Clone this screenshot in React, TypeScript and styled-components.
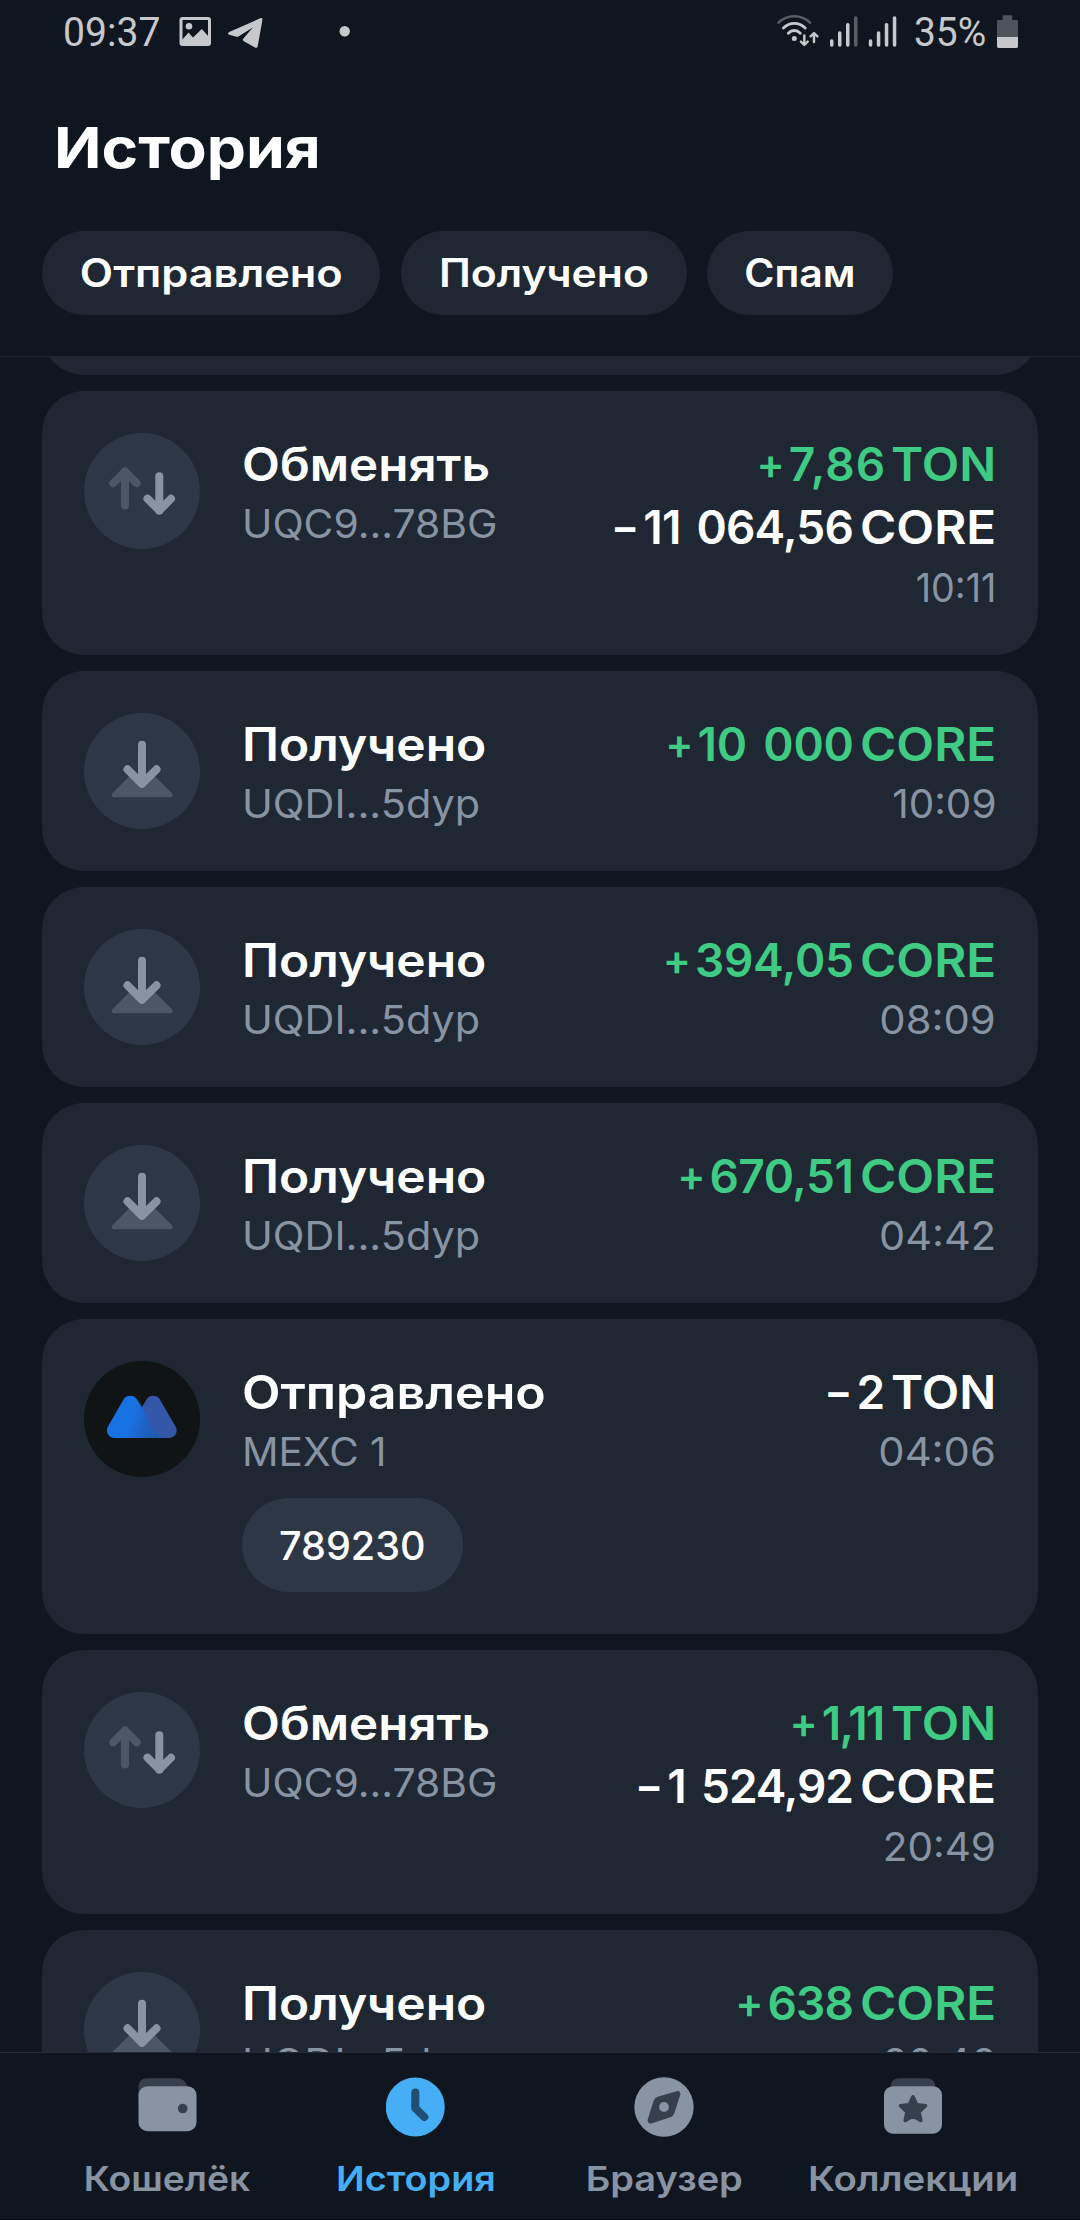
import React from "react";
import styled, { createGlobalStyle } from "styled-components";

const color = {
  page: "#10161f",
  card: "#1e2732",
  tint: "#2e3746",
  faint: "#4d5665",
  muted: "#8994a3",
  dim: "#363f4b",
  text: "#ffffff",
  green: "#3fcb84",
  blue: "#45aef5",
  status: "#c6c8cb",
};

const GlobalStyle = createGlobalStyle`
  *, *::before, *::after { box-sizing: border-box; }
  body {
    margin: 0;
    background: ${color.page};
    font-family: Inter, "Noto Sans", sans-serif;
    font-kerning: normal;
  }
  svg { display: block; flex: none; }
`;

/* Tracking is applied between letters only: the trailing space is pulled back. */
const Tracked = styled.span<{ $ls: number }>`
  letter-spacing: ${(p) => p.$ls}px;
  margin-right: ${(p) => -p.$ls}px;
  word-spacing: 5px;
  white-space: pre;
`;

const Wide = styled.span<{ $by: number; $from?: "left" | "right" | "center" }>`
  display: inline-block;
  white-space: pre;
  transform: scaleX(${(p) => p.$by});
  transform-origin: ${(p) => p.$from ?? "left"} center;
`;

const Screen = styled.div`
  display: flex;
  flex-direction: column;
  width: 1080px;
  height: 2220px;
  overflow: hidden;
  background: ${color.page};
  color: ${color.text};
`;

const Header = styled.header`
  flex: none;
  height: 357px;
  border-bottom: 1px solid #1f2731;
`;

const StatusBar = styled.div`
  display: flex;
  align-items: center;
  height: 66px;
  padding: 0 60px 0 63px;
  font: 400 40px/66px Roboto, sans-serif;
  color: ${color.status};
`;

const Clock = styled.div`
  width: 113px;
`;

const StatusRight = styled.div`
  display: flex;
  align-items: center;
  margin-left: auto;
`;

const Percent = styled.div`
  width: 96px;
  padding-left: 14px;
`;

const Title = styled.h1`
  margin: 0;
  padding-left: 53.5px;
  font-size: 56px;
  font-weight: 700;
  line-height: 165px;
`;

const Chips = styled.div`
  display: flex;
  gap: 20.5px;
  padding-left: 42px;
`;

const Chip = styled.button<{ $width: number }>`
  display: flex;
  align-items: center;
  justify-content: center;
  width: ${(p) => p.$width}px;
  height: 84px;
  padding: 0;
  border: 0;
  border-radius: 42px;
  background: ${color.card};
  color: ${color.text};
  font: 600 39px/84px Inter, "Noto Sans", sans-serif;
`;

const Scroller = styled.main`
  flex: 1;
  min-height: 0;
  overflow: hidden;
`;

const Feed = styled.div`
  display: flex;
  flex-direction: column;
  gap: 16px;
  margin-top: -182px;
  padding: 0 42px;
`;

const Card = styled.article`
  display: flex;
  flex: none;
  gap: 42px;
  min-height: 200px;
  padding: 42px 42px 38px;
  border-radius: 42px;
  background: ${color.card};
`;

const Info = styled.div`
  flex: 1;
  display: flex;
  flex-direction: column;
  align-items: flex-start;
`;

const Kind = styled.div`
  font-size: 46px;
  font-weight: 600;
  line-height: 62px;
`;

const Detail = styled.div`
  font-size: 39px;
  line-height: 58px;
  color: ${color.muted};
`;

const Comment = styled.div`
  display: flex;
  align-items: center;
  justify-content: center;
  width: 221px;
  height: 94px;
  margin: 17px 0 4px;
  border-radius: 47px;
  background: ${color.tint};
  font-size: 39px;
  font-weight: 500;
`;

const Totals = styled.div`
  display: flex;
  flex-direction: column;
  align-items: flex-end;
`;

const Amount = styled.div<{ $incoming: boolean }>`
  display: flex;
  align-items: center;
  font-size: 46px;
  font-weight: 600;
  line-height: 62px;
  color: ${(p) => (p.$incoming ? color.green : color.text)};
  & + & { line-height: 64px; }
`;

const Sign = styled.span`
  margin-right: 4px;
  font-size: 42px;
`;

const Unit = styled.span<{ $gap: number }>`
  margin-left: ${(p) => p.$gap}px;
`;

const Nav = styled.nav`
  flex: none;
  display: flex;
  height: 168px;
  padding: 24px 43px 0;
  border-top: 1px solid #222a34;
  border-bottom: 1px solid #04060b;
`;

const NavItem = styled.div<{ $active?: boolean }>`
  flex: 1;
  display: flex;
  flex-direction: column;
  align-items: center;
  gap: 20px;
  font-size: 34px;
  font-weight: 600;
  line-height: 44px;
  color: ${(p) => (p.$active ? color.blue : color.muted)};
`;

const SwapIcon = () => (
  <svg width="116" height="116" viewBox="0 0 116 116" fill="none" strokeWidth="8" strokeLinecap="round" strokeLinejoin="round">
    <circle cx="58" cy="58" r="58" fill={color.tint} />
    <path d="M41 72.5V38.5M29.3 50.3L41 38.5L52.7 50.3" stroke={color.faint} />
    <path d="M75.3 43.2V77.7M63.5 65.7L75.3 77.5L87 65.7" stroke={color.muted} />
  </svg>
);

const ReceiveIcon = () => (
  <svg width="116" height="116" viewBox="0 0 116 116" fill="none">
    <circle cx="58" cy="58" r="58" fill={color.tint} />
    <path d="M45 63.5L28.4 80.2C26.8 81.8 27.8 84.2 30 84.2H86.3C88.5 84.2 89.5 81.8 87.9 80.2L71 63.5L58 75Z" fill={color.faint} />
    <path d="M58 31.7V70.5M43.5 56.3L58 70.8L72.5 56.3" stroke={color.muted} strokeWidth="8" strokeLinecap="round" strokeLinejoin="round" />
  </svg>
);

const MexcIcon = () => (
  <svg width="116" height="116" viewBox="0 0 116 116">
    <defs>
      <linearGradient id="fold" x1="46" y1="60" x2="78" y2="72" gradientUnits="userSpaceOnUse">
        <stop offset="0" stopColor="#1972e2" />
        <stop offset="0.45" stopColor="#1d62c4" />
        <stop offset="1" stopColor="#2356a8" />
      </linearGradient>
    </defs>
    <circle cx="58" cy="58" r="58" fill="#111415" />
    <path d="M58 46L62.8 38C65.5 33.6 73 33.6 75.6 38L91.5 65.5C94.8 71 91 77 84.5 77H58Z" fill="#3457a9" />
    <path d="M58 46C62 56 68 68 78 77H31C24.5 77 21 71 24 65.5L39.8 38C42.5 33.6 50 33.6 52.6 38Z" fill="url(#fold)" />
  </svg>
);

const NotificationIcons = () => (
  <svg width="180" height="66" viewBox="176 0 180 66" fill={color.status}>
    <rect x="181" y="18.5" width="28.5" height="26" rx="1.5" fill="none" stroke={color.status} strokeWidth="3" />
    <circle cx="189" cy="26.3" r="3.3" />
    <path d="M182 40L188.5 32.5L193 37.5L201.8 29L209 37V44.5H182Z" />
    <path d="M260.2 18.3C261.6 17.7 262.6 18.3 262.4 20L257.7 46.3C257.4 47.9 256.2 48.2 254.9 47.4L243.5 41C242.6 40.4 242.7 39.4 243.4 38.6L252.8 27.4L238.8 36.2C237.8 36.8 236.6 36.8 235.5 36.5L229.2 34.8C227.6 34.3 227.6 32.6 229.2 31.9Z" />
    <circle cx="344.7" cy="31.2" r="5.2" />
  </svg>
);

const bars = [
  { x: 0, top: 39.3 },
  { x: 8, top: 31.3 },
  { x: 16, top: 23 },
  { x: 24, top: 16.3 },
];

const NetworkIcons = () => (
  <svg width="128" height="66" viewBox="772 0 128 66" fill="none" strokeLinecap="round" strokeLinejoin="round">
    <path d="M778.5 22.6C787.5 14.2 801 14.2 810 22.6" stroke="#5a5e65" strokeWidth="2.6" />
    <path d="M783.4 28C789.8 21.8 798.8 21.8 805.2 28" stroke={color.status} strokeWidth="2.8" />
    <path d="M788.3 33.2C791.8 29.6 796.8 29.6 800.3 33.2" stroke={color.status} strokeWidth="2.8" />
    <circle cx="794.3" cy="38.4" r="2.5" fill={color.status} />
    <path d="M804.3 35.5V44.5M800.9 41.6L804.3 45L807.7 41.6M814 42V33.3M810.6 36.4L814 33L817.4 36.4" stroke={color.status} strokeWidth="2.4" />
    {[830, 868.8].map((left, group) =>
      bars.map((b, i) => (
        <rect key={left + b.x} x={left + b.x} y={b.top} width="3.5" height={46.7 - b.top} rx="1.6" fill={group === 0 && i === 3 ? "#5a5e65" : color.status} />
      ))
    )}
  </svg>
);

const BatteryIcon = () => (
  <svg width="24" height="66" viewBox="996 0 24 66">
    <path d="M1002.6 15.2H1012.2V20H1016.5C1017.6 20 1018 20.5 1018 21.5V37H997V21.5C997 20.5 997.4 20 998.5 20H1002.6Z" fill="#4e525a" />
    <path d="M997 37H1018V46.3C1018 47.4 1017.5 48 1016.5 48H998.5C997.5 48 997 47.4 997 46.3Z" fill={color.status} />
  </svg>
);

const WalletIcon = () => (
  <svg width="60" height="60" viewBox="0 0 60 60">
    <path d="M1.5 20V10C1.5 4.5 5 1.2 10.500 1.2H40C45 1.2 49 4.5 50.5 10V20Z" fill={color.dim} />
    <rect x="1.5" y="9.2" width="58" height="45" rx="9" fill={color.muted} />
    <circle cx="45.700" cy="31.5" r="4.8" fill={color.dim} />
  </svg>
);

const HistoryIcon = () => (
  <svg width="60" height="60" viewBox="1 0 60 60">
    <circle cx="30.3" cy="30" r="29.5" fill={color.blue} />
    <path d="M30.3 15.5V31.2L39.3 40" fill="none" stroke="#1f4f72" strokeWidth="8" strokeLinecap="round" strokeLinejoin="round" />
  </svg>
);

const BrowserIcon = () => (
  <svg width="60" height="60" viewBox="0 0 60 60">
    <circle cx="30" cy="30" r="29.7" fill={color.muted} />
    <path d="M42.5 14.2L24.5 19.6C21.8 20.4 20.3 22 19.4 24.6L13.8 42.2C13 45 15.2 47.2 18 46.3L35.5 40.6C38.2 39.8 39.7 38 40.6 35.4L46.2 18C47 15.4 45.2 13.4 42.5 14.2Z" fill={color.dim} />
    <circle cx="30" cy="30" r="4.9" fill={color.muted} />
  </svg>
);

const CollectionsIcon = () => (
  <svg width="60" height="60" viewBox="0 0 60 60">
    <path d="M7.5 14V10C8 4.5 11 1.2 16.5 1.2H43.5C49 1.2 52 4.5 52.5 10V14Z" fill={color.dim} />
    <rect x="1" y="9.2" width="58" height="47.5" rx="9" fill={color.muted} />
    <path d="M30 19.8L33.7 27.7L42.5 28.8L36 34.9L37.8 43.5L30 39.2L22.2 43.5L24 34.9L17.5 28.8L26.3 27.7Z" fill={color.dim} stroke={color.dim} strokeWidth="3.6" strokeLinejoin="round" />
  </svg>
);

type Text = { text: string; wide: number };
type Sum = { sign: "+" | "−"; value: string; ls: number; unit: "TON" | "CORE" };
type Transaction = { icon: React.FC; kind: Text; detail: Text; comment?: Text; sums: Sum[]; time: Text };

const t = (text: string, wide: number): Text => ({ text, wide });
const sum = (sign: Sum["sign"], value: string, ls: number, unit: Sum["unit"]): Sum => ({ sign, value, ls, unit });

const units = {
  TON: { wide: 1.06, gap: 11.5 },
  CORE: { wide: 1.071, gap: 15 },
};

const swapped = { icon: SwapIcon, kind: t("Обменять", 1.072), detail: t("UQC9...78BG", 1.047) };
const received = { icon: ReceiveIcon, kind: t("Получено", 1.08), detail: t("UQDI...5dyp", 1.062) };

const transactions: Transaction[] = [
  { ...swapped, sums: [sum("+", "7,86", 1.12, "TON"), sum("−", "11 064,56", -0.8, "CORE")], time: t("10:11", 0.968) },
  { ...received, sums: [sum("+", "10 000", -0.2, "CORE")], time: t("10:09", 1.038) },
  { ...received, sums: [sum("+", "394,05", -0.3, "CORE")], time: t("08:09", 1.071) },
  { ...received, sums: [sum("+", "670,51", -0.49, "CORE")], time: t("04:42", 1.064) },
  {
    icon: MexcIcon,
    kind: t("Отправлено", 1.089),
    detail: t("MEXC 1", 1.038),
    comment: t("789230", 1.015),
    sums: [sum("−", "2", 0, "TON")],
    time: t("04:06", 1.07),
  },
  { ...swapped, sums: [sum("+", "1,11", -1.83, "TON"), sum("−", "1 524,92", -1.08, "CORE")], time: t("20:49", 1.04) },
  { ...received, sums: [sum("+", "638", -0.85, "CORE")], time: t("20:46", 1.04) },
];

const filters = [
  { label: t("Отправлено", 1.111), width: 338 },
  { label: t("Получено", 1.095), width: 286 },
  { label: t("Спам", 1.051), width: 186 },
];

const tabs = [
  { label: t("Кошелёк", 1.096), icon: WalletIcon },
  { label: t("История", 1.111), icon: HistoryIcon, active: true },
  { label: t("Браузер", 1.118), icon: BrowserIcon },
  { label: t("Коллекции", 1.128), icon: CollectionsIcon },
];

const Label = ({ value, from }: { value: Text; from?: "left" | "right" | "center" }) => (
  <Wide $by={value.wide} $from={from}>{value.text}</Wide>
);

const TransactionCard = ({ icon: Icon, kind, detail, comment, sums, time }: Transaction) => (
  <Card>
    <Icon />
    <Info>
      <Kind><Label value={kind} /></Kind>
      <Detail><Label value={detail} /></Detail>
      {comment && <Comment><Label value={comment} from="center" /></Comment>}
    </Info>
    <Totals>
      {sums.map((s) => (
        <Amount key={s.value} $incoming={s.sign === "+"}>
          <Sign>{s.sign}</Sign>
          <Tracked $ls={s.ls}>{s.value}</Tracked>
          <Unit $gap={units[s.unit].gap}>
            <Wide $by={units[s.unit].wide} $from="right">{s.unit}</Wide>
          </Unit>
        </Amount>
      ))}
      <Detail><Label value={time} from="right" /></Detail>
    </Totals>
  </Card>
);

export default function App() {
  return (
    <Screen>
      <GlobalStyle />
      <Header>
        <StatusBar>
          <Clock><Wide $by={0.978}>09:37</Wide></Clock>
          <NotificationIcons />
          <StatusRight>
            <NetworkIcons />
            <Percent><Wide $by={0.973}>35%</Wide></Percent>
            <BatteryIcon />
          </StatusRight>
        </StatusBar>
        <Title><Wide $by={1.113}>История</Wide></Title>
        <Chips>
          {filters.map((f) => (
            <Chip key={f.label.text} $width={f.width}><Label value={f.label} from="center" /></Chip>
          ))}
        </Chips>
      </Header>
      <Scroller>
        <Feed>
          <Card />
          {transactions.map((item) => (
            <TransactionCard key={item.time.text} {...item} />
          ))}
        </Feed>
      </Scroller>
      <Nav>
        {tabs.map((tab) => (
          <NavItem key={tab.label.text} $active={tab.active}>
            <tab.icon />
            <Label value={tab.label} from="center" />
          </NavItem>
        ))}
      </Nav>
    </Screen>
  );
}
